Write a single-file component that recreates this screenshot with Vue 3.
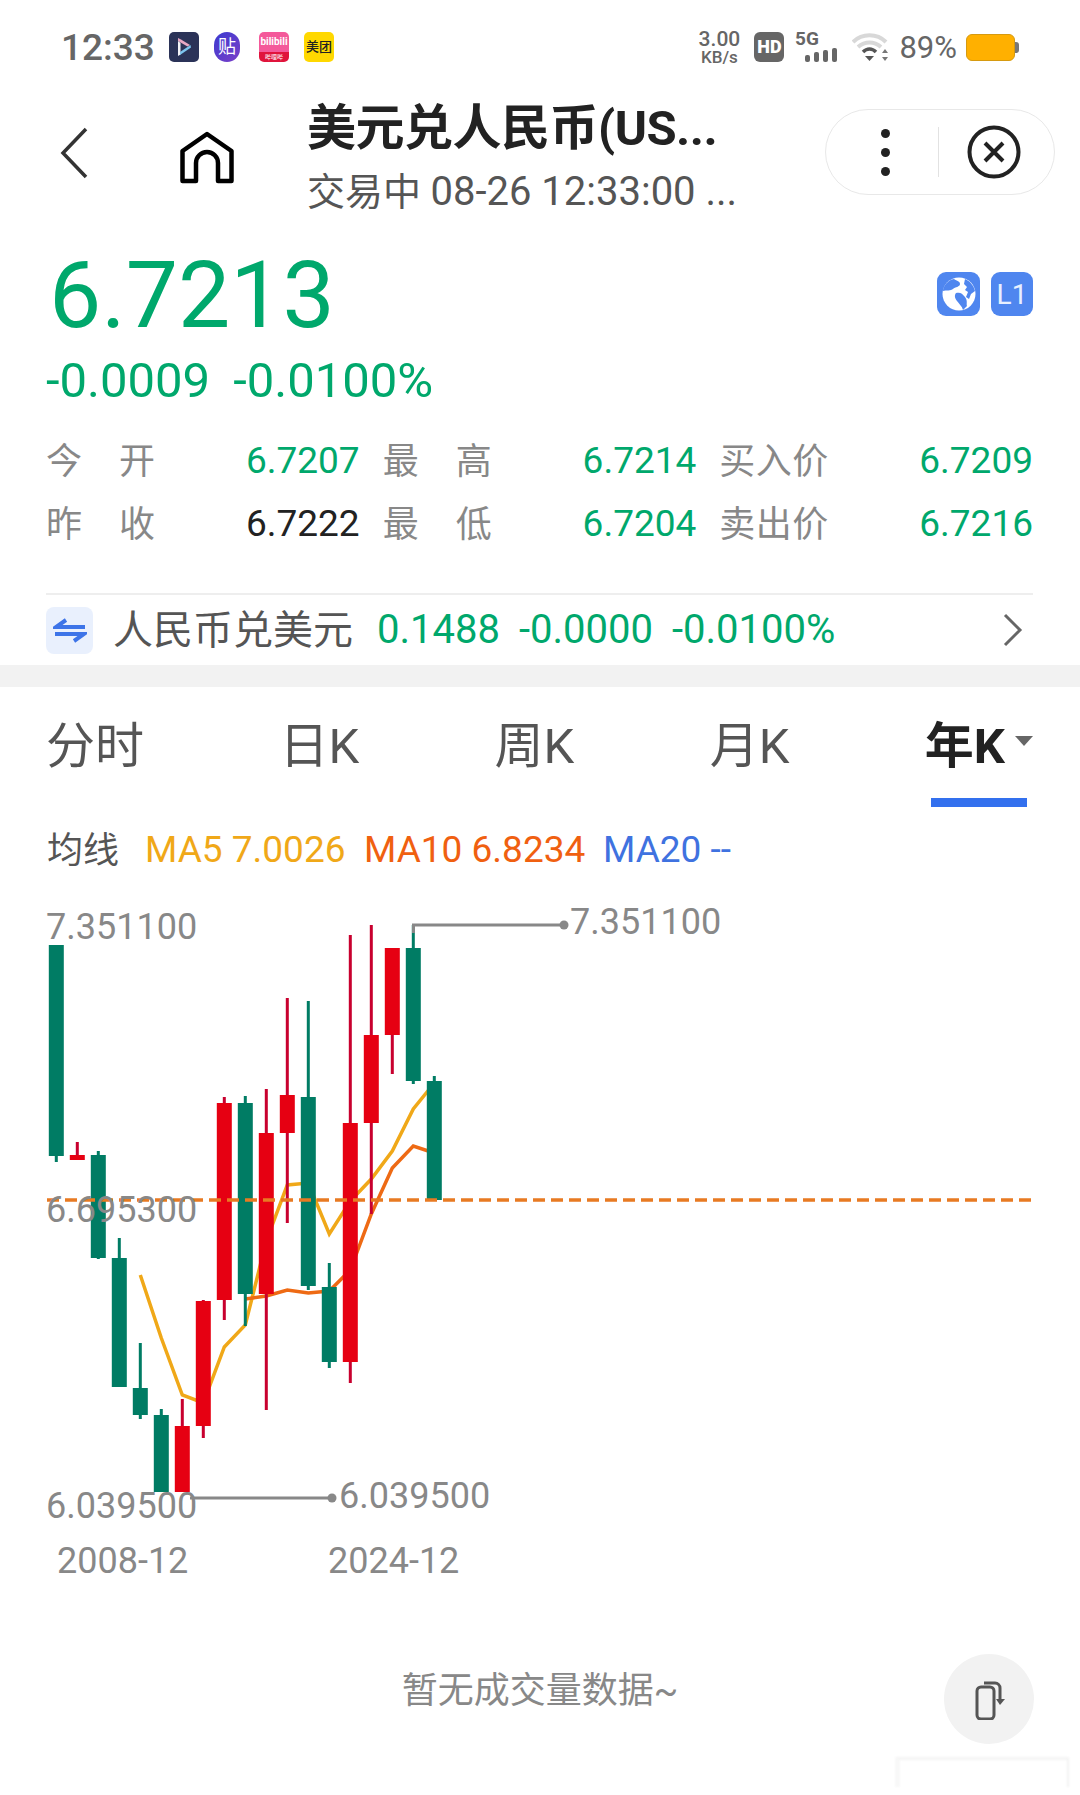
<template>
  <div class="page">
    <!-- status bar -->
    <div class="status">
      <span class="time">12:33</span>
      <div class="apps">
        <svg class="app" viewBox="0 0 30 30">
          <rect width="30" height="30" rx="5" fill="#2b3358" />
          <path d="M9 6l3 1.5 9 5.5-2.5 1.5L9 9z" fill="#e8a8c4" />
          <path d="M9 9v15l2.5-1.5V11z" fill="#f4f4f8" />
          <path d="M11 23l11-7.5-.5-2.5-10.5 7z" fill="#7cc4ee" />
        </svg>
        <div class="app tie">贴</div>
        <div class="app bili">
          <span class="bili-top">bilibili</span>
          <span class="bili-low">哔哩哔</span>
        </div>
        <div class="app mt">美团</div>
      </div>
      <div class="sys">
        <div class="speed"><span class="speed-num">3.00</span><span class="speed-unit">KB/s</span></div>
        <div class="hd">HD</div>
        <svg class="sig" width="46" height="32" viewBox="0 0 46 32">
          <text x="0" y="14" class="sig-text">5G</text>
          <rect x="10" y="24" width="5" height="7" rx="2" />
          <rect x="19" y="21" width="5" height="10" rx="2" />
          <rect x="28" y="19" width="5" height="12" rx="2" />
          <rect x="37" y="17" width="5" height="14" rx="2" />
        </svg>
        <svg class="wifi" width="38" height="30" viewBox="0 0 38 30">
          <path d="M1 10C10 1 25 1 34 10" fill="none" stroke="#d8d8d8" stroke-width="4" />
          <path d="M6 15C13 9 22 9 29 15" fill="none" stroke="#d8d8d8" stroke-width="4" />
          <path d="M11 20C15 16 20 16 24 20" fill="none" stroke="#555" stroke-width="3.5" />
          <path d="M13 24h9l-4.500 5z" fill="#555" />
          <path d="M33 17l3 4h-6zM33 29l3-4h-6z" fill="#777" />
        </svg>
        <span class="pct">89%</span>
        <div class="battery"></div>
      </div>
    </div>

    <!-- title bar -->
    <div class="nav">
      <svg class="back" width="28" height="52" viewBox="0 0 28 52">
        <path d="M26 2L3 26l23 24" fill="none" stroke="#333" stroke-width="3.5" />
      </svg>
      <svg class="home" width="54" height="54" viewBox="0 0 54 54">
        <path d="M2.500 50V20L27 3l24.500 17v30H38V32a11 11 0 0 0-22 0v18z" fill="none" stroke="#000" stroke-width="4.500" stroke-linejoin="round" />
      </svg>
      <div class="titles">
        <div class="title">美元兑人民币(US...</div>
        <div class="sub">交易中 <span class="sub-time">08-26 12:33:00 ...</span></div>
      </div>
      <div class="capsule">
        <div class="dots"><i></i><i></i><i></i></div>
        <div class="cap-div"></div>
        <svg width="54" height="54" viewBox="0 0 54 54">
          <circle cx="27" cy="27" r="24.500" fill="none" stroke="#222" stroke-width="4" />
          <path d="M18 18l18 18M36 18L18 36" stroke="#222" stroke-width="4" />
        </svg>
      </div>
    </div>

    <!-- price -->
    <div class="quote">
      <div class="price-row">
        <span class="price">6.7213</span>
        <div class="badges">
          <div class="badge">
            <svg width="36" height="36" viewBox="0 0 36 36">
              <circle cx="18" cy="18" r="16.500" fill="#fff" />
              <path d="M13 3c3 2 6 2 6 5s-5 3-7 5-7 1-10 2c0-5 5-11 11-12zM24 3c5 2 9 7 10 12l-4 3-2 5-3-2 2-5-3-2 2-3-3-3zM15 17c4-1 6 0 9 4s1 7 2 9l-4 4c-1-4-4-6-6-9s-3-5-1-8z" fill="#4f86ef" />
            </svg>
          </div>
          <div class="badge l1">L1</div>
        </div>
      </div>
      <div class="change"><span>-0.0009</span><span>-0.0100%</span></div>
    </div>

    <!-- open / high / low -->
    <div class="stats">
      <div class="stat" v-for="s in stats" :key="s.label">
        <div class="stat-label"><span v-for="c in s.label" :key="c">{{ c }}</span></div>
        <span class="stat-val" :class="{ dark: s.dark }">{{ s.value }}</span>
      </div>
    </div>

    <!-- inverse pair -->
    <div class="pair-wrap">
      <div class="pair">
        <div class="swap">
          <svg width="34" height="30" viewBox="0 0 34 30">
            <path d="M32 12H3l10-7M2 19h29l-10 7" fill="none" stroke="#3d74e8" stroke-width="4" />
          </svg>
        </div>
        <span class="pair-name">人民币兑美元</span>
        <span class="pair-nums"><span>0.1488</span><span>-0.0000</span><span>-0.0100%</span></span>
        <svg class="more" width="20" height="34" viewBox="0 0 20 34">
          <path d="M2 2l15 15L2 32" fill="none" stroke="#666" stroke-width="3" />
        </svg>
      </div>
    </div>
    <div class="band"></div>

    <!-- period tabs -->
    <div class="tabs">
      <span v-for="t in tabs" :key="t" class="tab">{{ t }}</span>
      <span class="tab active">年K<i class="caret"></i></span>
    </div>

    <div class="ma">
      <span class="ma-label">均线</span>
      <span class="ma5">MA5 7.0026</span>
      <span class="ma10">MA10 6.8234</span>
      <span class="ma20">MA20 --</span>
    </div>

    <!-- kline chart, y values are page offsets minus 900 -->
    <svg class="chart" width="1080" height="700" viewBox="0 900 1080 700">
      <polyline :points="ma5" class="line" stroke="#f0a818" />
      <polyline :points="ma10" class="line" stroke="#ee6a14" />
      <g v-for="(c, i) in candles" :key="i">
        <rect :x="xOf(i) - 1.500" :y="c.hi" width="3" :height="c.lo - c.hi" :fill="c.up ? '#c8002e' : '#007c64'" />
        <rect :x="xOf(i) - 7.500" :y="c.top" width="15" :height="c.bot - c.top" :fill="c.up ? '#e60012' : '#007c64'" />
      </g>
      <line x1="47" y1="1199" x2="1032" y2="1199" stroke="#e87a22" stroke-width="3.500" stroke-dasharray="12 6" />
      <path d="M413.500 932V924H564M190 1497H332" fill="none" stroke="#888" stroke-width="3" />
      <circle cx="564" cy="924" r="4.500" fill="#888" />
      <circle cx="332" cy="1497" r="4.500" fill="#888" />
      <text x="46" y="938" class="axis">7.351100</text>
      <text x="46" y="1221" class="axis">6.695300</text>
      <text x="46" y="1517" class="axis">6.039500</text>
      <text x="570" y="933" class="axis">7.351100</text>
      <text x="339" y="1507" class="axis">6.039500</text>
      <text x="57" y="1572" class="axis">2008-12</text>
      <text x="328" y="1572" class="axis">2024-12</text>
    </svg>

    <div class="volume">
      <span class="no-vol">暂无成交量数据~</span>
      <div class="rotate">
        <svg width="36" height="42" viewBox="0 0 36 42">
          <rect x="6" y="9" width="17" height="32" rx="4" fill="none" stroke="#555" stroke-width="3" />
          <path d="M13 5h11a5 5 0 0 1 5 5v14" fill="none" stroke="#555" stroke-width="3" />
          <path d="M25 21h9l-5 6z" fill="#555" />
        </svg>
      </div>
    </div>
    <div class="ghost"></div>
  </div>
</template>

<script setup>
const stats = [
  { label: '今开', value: '6.7207' },
  { label: '最高', value: '6.7214' },
  { label: '买入价', value: '6.7209' },
  { label: '昨收', value: '6.7222', dark: true },
  { label: '最低', value: '6.7204' },
  { label: '卖出价', value: '6.7216' },
]

const tabs = ['分时', '日K', '周K', '月K']

const xOf = i => 56.3 + i * 21

const candles = [
  { up: false, hi: 944, lo: 1161, top: 944, bot: 1155 },
  { up: true, hi: 1141, lo: 1159, top: 1154, bot: 1159 },
  { up: false, hi: 1150, lo: 1258, top: 1154, bot: 1257 },
  { up: false, hi: 1237, lo: 1386, top: 1257, bot: 1386 },
  { up: false, hi: 1342, lo: 1418, top: 1387, bot: 1414 },
  { up: false, hi: 1408, lo: 1491, top: 1414, bot: 1491 },
  { up: true, hi: 1398, lo: 1491, top: 1425, bot: 1491 },
  { up: true, hi: 1299, lo: 1437, top: 1300, bot: 1425 },
  { up: true, hi: 1096, lo: 1319, top: 1102, bot: 1299 },
  { up: false, hi: 1095, lo: 1325, top: 1102, bot: 1293 },
  { up: true, hi: 1088, lo: 1409, top: 1132, bot: 1293 },
  { up: true, hi: 997, lo: 1222, top: 1094, bot: 1132 },
  { up: false, hi: 1000, lo: 1289, top: 1096, bot: 1285 },
  { up: false, hi: 1262, lo: 1367, top: 1286, bot: 1361 },
  { up: true, hi: 934, lo: 1382, top: 1122, bot: 1361 },
  { up: true, hi: 924, lo: 1213, top: 1034, bot: 1122 },
  { up: true, hi: 947, lo: 1073, top: 947, bot: 1034 },
  { up: false, hi: 924, lo: 1083, top: 947, bot: 1080 },
  { up: false, hi: 1075, lo: 1199, top: 1080, bot: 1199 },
]

const ma5 = [
  [4, 1274], [5, 1337], [6, 1394], [7, 1402], [8, 1346], [9, 1324], [10, 1240], [11, 1184],
  [12, 1182], [13, 1233], [14, 1200], [15, 1178], [16, 1150], [17, 1108], [18, 1082],
].map(([i, y]) => `${xOf(i)},${y}`).join(' ')

const ma10 = [
  [9, 1298], [10, 1295], [11, 1289], [12, 1292], [13, 1290], [14, 1269], [15, 1213],
  [16, 1167], [17, 1145], [18, 1152],
].map(([i, y]) => `${xOf(i)},${y}`).join(' ')
</script>

<style>
html, body { background: #fff; }
</style>

<style scoped>
.page {
  width: 1080px;
  height: 1795px;
  overflow: hidden;
  background: #fff;
  position: relative;
  font-family: Roboto, "Noto Sans CJK SC", sans-serif;
}

/* status bar */
.status {
  height: 94px;
  padding: 0 65px 0 61px;
  display: flex;
  align-items: center;
  box-sizing: border-box;
}
.time { font-size: 37px; font-weight: 500; color: #666; width: 108px; }
.apps { display: flex; align-items: center; gap: 15px; }
.app { width: 30px; height: 30px; display: block; }
.tie {
  width: 26px;
  border-radius: 13px;
  background: linear-gradient(135deg, #3a3ad0, #7b3fc8);
  color: #fff;
  font-size: 18px;
  line-height: 30px;
  text-align: center;
}
.bili {
  margin-left: 4px;
  border-radius: 5px;
  background: linear-gradient(#f4599a 68%, #e0143c 68%);
  color: #fff;
  display: flex;
  flex-direction: column;
  align-items: center;
}
.bili-top { font-size: 10px; line-height: 20px; font-weight: 700; }
.bili-low { font-size: 6px; line-height: 9px; }
.mt {
  border-radius: 5px;
  background: #ffd800;
  color: #222;
  font-size: 13px;
  font-weight: 500;
  line-height: 30px;
  text-align: center;
}
.sys { margin-left: auto; display: flex; align-items: center; }
.speed {
  display: flex;
  flex-direction: column;
  align-items: center;
  font-weight: 500;
  color: #666;
  width: 44px;
}
.speed-num { font-size: 21px; line-height: 25px; margin-bottom: -5px; }
.speed-unit { font-size: 17px; line-height: 20px; }
.hd {
  margin-left: 13px;
  width: 30px;
  height: 30px;
  border-radius: 6px;
  background: #666;
  color: #fff;
  font-size: 18px;
  font-weight: 900;
  line-height: 30px;
  text-align: center;
}
.sig { margin-left: 11px; fill: #666; }
.sig-text { font-size: 19px; font-weight: 700; }
.wifi { margin-left: 11px; }
.pct { margin-left: 9px; font-size: 31px; color: #666; }
.battery {
  margin-left: 9px;
  width: 49px;
  height: 27px;
  border-radius: 6px;
  background: #ffb000;
  border: 1px solid #d69a10;
  box-sizing: border-box;
  position: relative;
}
.battery::after {
  content: '';
  position: absolute;
  left: 48px;
  top: 7px;
  width: 4px;
  height: 11px;
  border-radius: 0 3px 3px 0;
  background: #777;
}

/* nav */
.nav {
  height: 110px;
  display: flex;
  align-items: center;
  padding-left: 60px;
  position: relative;
}
.back { margin-top: 8px; }
.home { margin-left: 92px; margin-top: 18px; }
.titles { margin-left: 73px; margin-top: 18px; width: 500px; }
.title { font-size: 49px; font-weight: 700; color: #222; line-height: 58px; letter-spacing: -0.5px; }
.sub { font-size: 38px; color: #555; line-height: 50px; margin-top: 9px; }
.sub-time { font-size: 40px; }
.capsule {
  position: absolute;
  left: 825px;
  top: 15px;
  width: 230px;
  height: 86px;
  box-sizing: border-box;
  border: 1px solid #e8e8e8;
  border-radius: 43px;
  display: flex;
  align-items: center;
}
.dots { margin-left: 55px; display: flex; flex-direction: column; gap: 10px; }
.dots i { width: 9px; height: 9px; border-radius: 50%; background: #222; display: block; }
.cap-div { margin-left: 48px; width: 1px; height: 50px; background: #e2e2e2; }
.capsule svg { margin-left: 28px; }

/* quote */
.quote { padding: 42px 47px 0 46px; }
.price-row { display: flex; justify-content: space-between; }
.price { font-size: 93px; line-height: 100px; color: #00a86c; margin-left: 3px; }
.badges { display: flex; gap: 11px; margin-top: 26px; }
.badge {
  width: 43px;
  height: 44px;
  border-radius: 9px;
  background: #4f86ef;
  color: #fff;
  display: flex;
  align-items: center;
  justify-content: center;
  font-size: 28px;
}
.l1 { width: 42px; color: #e8f0ff; }
.change {
  display: flex;
  gap: 23px;
  font-size: 49px;
  line-height: 56px;
  color: #00a86c;
  margin-top: 7px;
}

.stats {
  display: grid;
  grid-template-columns: repeat(3, 1fr);
  column-gap: 23px;
  row-gap: 24px;
  padding: 29px 47px 0 46px;
}
.stat { display: flex; justify-content: space-between; align-items: center; height: 39px; }
.stat-label {
  width: 109px;
  display: flex;
  justify-content: space-between;
  font-size: 36px;
  color: #888;
}
.stat-val { font-size: 37px; color: #00a86c; margin-top: 5px; }
.stat-val.dark { color: #222; }

.pair-wrap { padding: 53px 47px 0 46px; }
.pair {
  border-top: 2px solid #eee;
  height: 72px;
  display: flex;
  align-items: center;
  box-sizing: border-box;
}
.swap {
  width: 47px;
  height: 47px;
  border-radius: 8px;
  background: #e9f0fd;
  display: flex;
  align-items: center;
  justify-content: center;
}
.pair-name { margin-left: 20px; margin-top: -7px; font-size: 40px; color: #555; }
.pair-nums { margin-left: 24px; margin-top: -2px; display: flex; gap: 19px; font-size: 40px; color: #00a86c; }
.more { margin-left: auto; margin-right: 10px; }
.band { height: 22px; background: #f2f2f2; }

/* tabs */
.tabs {
  display: flex;
  justify-content: space-between;
  padding: 0 47px 0 46px;
  height: 109px;
  align-items: center;
}
.tab {
  font-size: 49px;
  color: #555;
  position: relative;
  display: flex;
  align-items: center;
  margin-top: -1px;
}
.tab.active { font-weight: 700; color: #222; }
.tab.active::after {
  content: '';
  position: absolute;
  left: 6px;
  top: 92px;
  width: 96px;
  height: 9px;
  background: #3370ee;
}
.caret {
  margin-left: 10px;
  width: 0;
  height: 0;
  border-left: 9px solid transparent;
  border-right: 9px solid transparent;
  border-top: 10px solid #666;
}

.ma {
  display: flex;
  align-items: center;
  height: 50px;
  padding-left: 47px;
  margin-top: 28px;
  font-size: 37px;
  white-space: nowrap;
}
.ma-label { color: #555; width: 98px; font-size: 36px; margin-top: -4px; }
.ma5 { color: #f0a818; width: 219px; }
.ma10 { color: #f06010; width: 239px; }
.ma20 { color: #3f72e0; }

.chart { display: block; margin-top: 27px; }
.line { fill: none; stroke-width: 3.500; }
.axis { font-size: 36px; fill: #888; }

.volume {
  position: relative;
  height: 95px;
  display: flex;
  align-items: center;
  justify-content: center;
}
.no-vol { font-size: 36px; color: #888; margin-top: 76px; }
.rotate {
  position: absolute;
  left: 944px;
  top: 53px;
  width: 90px;
  height: 90px;
  border-radius: 50%;
  background: #f2f2f2;
  display: flex;
  align-items: center;
  justify-content: center;
}
.ghost {
  position: absolute;
  left: 895px;
  top: 1757px;
  width: 174px;
  height: 30px;
  box-sizing: border-box;
  border-top: 3px solid #f4f4f4;
  border-right: 2px solid #f2f2f2;
  border-left: 5px solid #f8f8f8;
  filter: blur(1px);
}
</style>
